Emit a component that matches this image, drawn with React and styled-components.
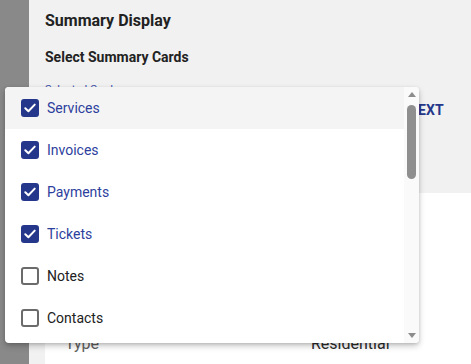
import React from "react";
import styled, { createGlobalStyle } from "styled-components";

const GlobalStyle = createGlobalStyle`
  html, body {
    margin: 0;
    padding: 0;
    background: #f1f1f1;
    font-family: Roboto, "Liberation Sans", sans-serif;
    overflow: hidden;
  }
`;

const Page = styled.div`
  display: flex;
  width: 471px;
  height: 364px;
  position: relative;
  overflow: hidden;
`;

const Backdrop = styled.div`
  width: 29px;
  flex-shrink: 0;
  background: #898989;
`;

const Panel = styled.div`
  flex: 1;
  background: #f1f1f1;
  padding: 10px 0 0 16px;
  display: flex;
  flex-direction: column;
`;

const Title = styled.h2`
  margin: 0;
  font-size: 16px;
  line-height: 22px;
  font-weight: 700;
  color: #222;
`;

const SubTitle = styled.h3`
  margin: 15px 0 0;
  font-size: 14px;
  line-height: 20px;
  font-weight: 700;
  color: #222;
`;

const FieldRow = styled.div`
  display: flex;
  justify-content: space-between;
  align-items: flex-start;
  margin-top: 16px;
  padding-right: 27px;
`;

const FieldLabel = styled.span`
  font-size: 11px;
  line-height: 14px;
  color: #3b4fa8;
`;

const NextButton = styled.button`
  border: none;
  background: none;
  padding: 0;
  margin-top: 19px;
  font-family: inherit;
  font-size: 14px;
  line-height: 17px;
  font-weight: 700;
  letter-spacing: 0.2px;
  color: #25378a;
`;

const Card = styled.div`
  margin-top: 74px;
  flex: 1;
  background: #fff;
  padding: 0 0 0 20px;
`;

const CardRow = styled.div`
  display: grid;
  grid-template-columns: 246px 1fr;
  padding-top: 141px;
  font-size: 16px;
  line-height: 20px;
`;

const CardKey = styled.span`
  color: #5f5f5f;
`;

const CardValue = styled.span`
  color: #2a2a2a;
`;

const Menu = styled.div`
  position: absolute;
  left: 5px;
  top: 87px;
  width: 414px;
  height: 256px;
  background: #fff;
  border-radius: 4px;
  box-shadow: 0 3px 6px rgba(0, 0, 0, 0.22), 0 1px 3px rgba(0, 0, 0, 0.12);
  display: flex;
  overflow: hidden;
`;

const List = styled.ul`
  list-style: none;
  margin: 0;
  padding: 0;
  flex: 1;
`;

const Item = styled.li`
  height: 42px;
  display: flex;
  align-items: center;
  gap: 8px;
  padding-left: 16px;
  padding-bottom: 1px;
  box-sizing: border-box;
  background: ${(p) => (p.active ? "#f4f4f4" : "#fff")};
  font-size: 14px;
  color: ${(p) => (p.checked ? "#2d3f9e" : "#212121")};
`;

const Box = styled.span`
  width: 18px;
  height: 18px;
  box-sizing: border-box;
  border-radius: 3px;
  display: flex;
  align-items: center;
  justify-content: center;
  background: ${(p) => (p.checked ? "#25378a" : "#fff")};
  border: ${(p) => (p.checked ? "none" : "2px solid #6b6b6b")};
`;

const Scrollbar = styled.div`
  width: 15px;
  background: #fafafa;
  display: flex;
  flex-direction: column;
  align-items: center;
  padding: 5px 0 5px;
  box-sizing: border-box;
`;

const Arrow = styled.div`
  width: 0;
  height: 0;
  border-left: 4.5px solid transparent;
  border-right: 4.5px solid transparent;
  ${(p) =>
    p.down
      ? "border-top: 5px solid #8c8c8c; margin-top: auto;"
      : "border-bottom: 5px solid #8c8c8c;"}
`;

const Thumb = styled.div`
  width: 9px;
  height: 74px;
  margin-top: 8px;
  border-radius: 5px;
  background: #8f8f8f;
`;

const items = [
  { label: "Services", checked: true },
  { label: "Invoices", checked: true },
  { label: "Payments", checked: true },
  { label: "Tickets", checked: true },
  { label: "Notes", checked: false },
  { label: "Contacts", checked: false },
];

function Check() {
  return (
    <svg width="12" height="10" viewBox="0 0 12 10">
      <path
        d="M1.3 5.2 L4.4 8.2 L10.7 1.6"
        fill="none"
        stroke="#fff"
        strokeWidth="2"
        strokeLinecap="round"
        strokeLinejoin="round"
      />
    </svg>
  );
}

export default function App() {
  return (
    <Page>
      <GlobalStyle />
      <Backdrop />
      <Panel>
        <Title>Summary Display</Title>
        <SubTitle>Select Summary Cards</SubTitle>
        <FieldRow>
          <FieldLabel>Selected Cards</FieldLabel>
          <NextButton>NEXT</NextButton>
        </FieldRow>
        <Card>
          <CardRow>
            <CardKey>Type</CardKey>
            <CardValue>Residential</CardValue>
          </CardRow>
        </Card>
      </Panel>
      <Menu>
        <List>
          {items.map((it, i) => (
            <Item key={it.label} checked={it.checked} active={i === 0}>
              <Box checked={it.checked}>{it.checked && <Check />}</Box>
              {it.label}
            </Item>
          ))}
        </List>
        <Scrollbar>
          <Arrow />
          <Thumb />
          <Arrow down />
        </Scrollbar>
      </Menu>
    </Page>
  );
}
